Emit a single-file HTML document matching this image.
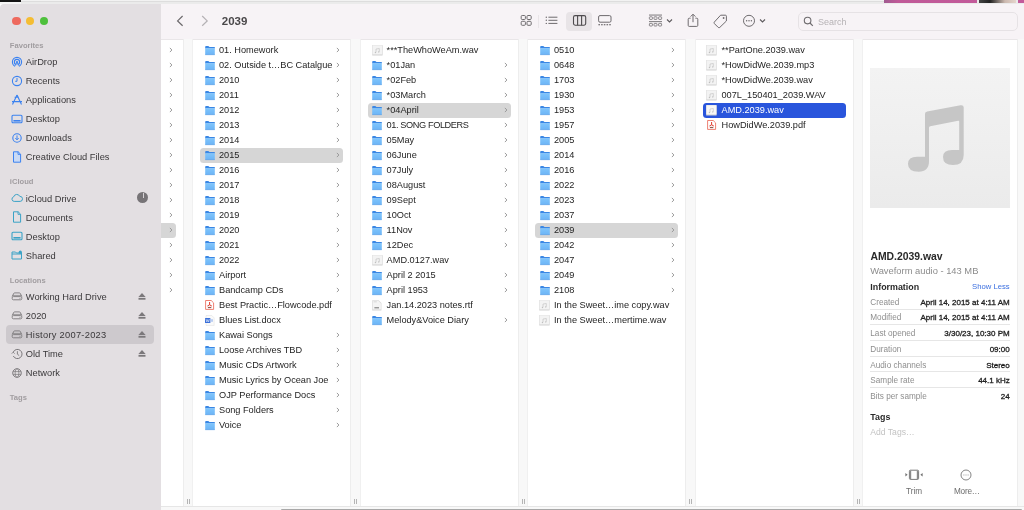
<!DOCTYPE html>
<html><head><meta charset="utf-8"><style>
*{box-sizing:border-box}
html,body{margin:0;padding:0;width:1024px;height:510px;overflow:hidden;background:#fff;font-family:"Liberation Sans", sans-serif}
.ic{position:absolute;display:block}
.hl{position:absolute;height:15px;border-radius:3.5px;background:#d6d6d6}
.rt{position:absolute;height:15px;line-height:15px;font-size:9.2px;white-space:nowrap;color:#242424;}
.gut{position:absolute;top:39px;height:467px;background:#f8f8f8;border-left:1px solid #ededed;border-right:1px solid #f0f0f0}
.grip{position:absolute;top:498.6px;width:3px;height:5px;border-left:1px solid #b4b4b4;border-right:1px solid #b4b4b4}
.sbsel{position:absolute;left:6px;width:148px;height:19px;border-radius:4px;background:#cdc9cd}
.sbt{position:absolute;left:25.8px;height:19px;line-height:19px;font-size:9.3px;color:#3a383a;white-space:nowrap;}
.sbi{position:absolute;left:10.5px;height:19px;display:flex;align-items:center}
.sbi svg{display:block}
.sbh{position:absolute;left:9.8px;height:19px;line-height:19px;font-size:7.6px;font-weight:bold;color:#a19da0;white-space:nowrap}
.pk{position:absolute;left:870.3px;height:10px;line-height:10px;font-size:8.2px;color:#8e8e8e;white-space:nowrap}
.pv{position:absolute;right:14.3px;height:10px;line-height:10px;font-size:8px;color:#1e1e1e;white-space:nowrap;-webkit-text-stroke:0.3px #1e1e1e}
.sep{position:absolute;left:870px;width:140px;height:1px;background:#e6e6e6}
</style></head><body><div id="root" style="position:absolute;left:0;top:0;width:1024px;height:510px;will-change:transform;overflow:hidden">
<!-- top strip -->
<div style="position:absolute;left:0;top:0;width:1024px;height:4px;background:#ebebeb"></div>
<div style="position:absolute;left:20px;top:0;width:864px;height:1px;background:#f2f2f2"></div>
<div style="position:absolute;left:20px;top:1.2px;width:864px;height:1px;background:#dddddd"></div>
<div style="position:absolute;left:0;top:0;width:21px;height:2px;background:#151515"></div>
<div style="position:absolute;left:0;top:2px;width:21px;height:1.5px;background:#f6f6f6"></div>
<div style="position:absolute;left:884px;top:0;width:93px;height:3px;background:linear-gradient(90deg,#a05a90,#c05a98 15%,#c25a9a)"></div>
<div style="position:absolute;left:979px;top:0;width:37px;height:3px;background:linear-gradient(90deg,#444 0%,#222 30%,#ccb9b0 70%,#e5d5cc 100%)"></div>
<div style="position:absolute;left:1018px;top:0;width:6px;height:3px;background:#c25a9a"></div>
<!-- sidebar -->
<div style="position:absolute;left:0;top:3.6px;width:161px;height:507px;background:#e3dfe2;border-top-left-radius:4px"></div>
<div style="position:absolute;left:12.1px;top:16.6px;width:8.6px;height:8.6px;border-radius:50%;background:#ee6a5e"></div>
<div style="position:absolute;left:25.8px;top:16.6px;width:8.6px;height:8.6px;border-radius:50%;background:#f4bd33"></div>
<div style="position:absolute;left:39.5px;top:16.6px;width:8.6px;height:8.6px;border-radius:50%;background:#4ec03c"></div>
<div class="sbh" style="top:36.45px">Favorites</div><div class="sbt" style="top:53.15px">AirDrop</div>
<div class="sbi" style="top:52.35px"><svg width="12" height="12" viewBox="0 0 12 12"><g fill="none" stroke="#3b82f0" stroke-width="1.15"><circle cx="6" cy="6" r="4.6"/><circle cx="6" cy="6" r="2.6"/></g><circle cx="6" cy="6" r="0.9" fill="#3b82f0"/><path d="M6 6.4 L3.2 12 L8.8 12 Z" fill="#e3dfe2"/><path d="M6 5.6 L4.6 9.6 M6 5.6 L7.4 9.6" stroke="#3b82f0" stroke-width="0.9"/></svg></div><div class="sbt" style="top:72.14999999999999px">Recents</div>
<div class="sbi" style="top:71.35px"><svg width="12" height="12" viewBox="0 0 12 12"><circle cx="6" cy="6" r="4.6" fill="none" stroke="#3b82f0" stroke-width="1.1"/><path d="M6 3 L6 6.3 L4.2 6.3" fill="none" stroke="#3b82f0" stroke-width="1"/></svg></div><div class="sbt" style="top:91.14999999999999px">Applications</div>
<div class="sbi" style="top:90.35px"><svg width="12" height="12" viewBox="0 0 12 12"><path d="M6 1 L10.5 10.5 M6 1 L1.5 10.5 M1 7.6 L11 7.6 M3.6 3.2 L7.8 3.2" fill="none" stroke="#3b82f0" stroke-width="1.1"/></svg></div><div class="sbt" style="top:110.14999999999999px">Desktop</div>
<div class="sbi" style="top:109.35px"><svg width="12" height="12" viewBox="0 0 12 12"><rect x="1" y="2.2" width="10" height="7.6" rx="1" fill="none" stroke="#3b82f0" stroke-width="1.1"/><rect x="2.4" y="7" width="7.2" height="1.6" fill="#3b82f0"/></svg></div><div class="sbt" style="top:129.15px">Downloads</div>
<div class="sbi" style="top:128.35px"><svg width="12" height="12" viewBox="0 0 12 12"><circle cx="6" cy="6" r="4.2" fill="none" stroke="#3b82f0" stroke-width="1.1"/><path d="M6 3.4 L6 7.8 M4.3 6.1 L6 7.8 L7.7 6.1" fill="none" stroke="#3b82f0" stroke-width="1"/></svg></div><div class="sbt" style="top:148.15px">Creative Cloud Files</div>
<div class="sbi" style="top:147.35px"><svg width="12" height="12" viewBox="0 0 12 12"><path d="M2.5 0.8 L7.2 0.8 L9.6 3.2 L9.6 11.2 L2.5 11.2 Z" fill="#c9daf5" stroke="#3b82f0" stroke-width="1"/><path d="M7 0.8 L7 3.4 L9.6 3.4" fill="none" stroke="#3b82f0" stroke-width="0.9"/></svg></div><div class="sbh" style="top:172.25px">iCloud</div><div class="sbt" style="top:189.55px">iCloud Drive</div>
<div class="sbi" style="top:188.75px"><svg width="12" height="12" viewBox="0 0 12 12"><path d="M3.2 9.4 A2.3 2.3 0 0 1 2.6 4.9 A3.3 3.3 0 0 1 8.8 4.4 A2.5 2.5 0 0 1 9.2 9.4 Z" fill="none" stroke="#3aa2c6" stroke-width="1"/></svg></div><div class="sbt" style="top:208.55px">Documents</div>
<div class="sbi" style="top:207.75px"><svg width="12" height="12" viewBox="0 0 12 12"><path d="M2.5 0.8 L7.2 0.8 L9.6 3.2 L9.6 11.2 L2.5 11.2 Z" fill="none" stroke="#3aa2c6" stroke-width="1"/><path d="M7 0.8 L7 3.4 L9.6 3.4" fill="none" stroke="#3aa2c6" stroke-width="0.9"/></svg></div><div class="sbt" style="top:227.55px">Desktop</div>
<div class="sbi" style="top:226.75px"><svg width="12" height="12" viewBox="0 0 12 12"><rect x="1" y="2.2" width="10" height="7.6" rx="1" fill="none" stroke="#3aa2c6" stroke-width="1.1"/><rect x="2.4" y="7" width="7.2" height="1.6" fill="#3aa2c6"/></svg></div><div class="sbt" style="top:246.54999999999998px">Shared</div>
<div class="sbi" style="top:245.74999999999997px"><svg width="12" height="12" viewBox="0 0 12 12"><path d="M1 3 L4.5 3 L5.5 4 L10.5 4 L10.5 10 L1 10 Z M1 5 L10.5 5" fill="none" stroke="#3aa2c6" stroke-width="1"/><circle cx="9.3" cy="3.2" r="1.6" fill="#3aa2c6"/></svg></div><div style="position:absolute;left:137.3px;top:192px;width:11px;height:11px;border-radius:50%;background:#777477"></div><div style="position:absolute;left:142.5px;top:192.6px;width:0.7px;height:5px;background:#d6d2d5"></div><div class="sbh" style="top:270.75000000000006px">Locations</div><div class="sbt" style="top:287.55px">Working Hard Drive</div>
<div class="sbi" style="top:286.75px"><svg width="12" height="12" viewBox="0 0 12 12"><g fill="none" stroke="#7b787b" stroke-width="0.9"><path d="M1.2 6.6 L2.8 3.3 Q3 2.9 3.5 2.9 L8.5 2.9 Q9 2.9 9.2 3.3 L10.8 6.6"/><rect x="1.2" y="6.6" width="9.6" height="3.2" rx="1.2"/><path d="M1.6 5.4 L10.4 5.4" stroke-width="0.7"/></g><circle cx="9" cy="8.2" r="0.5" fill="#7b787b"/></svg></div>
<svg class="ic" style="left:137.7px;top:292.55px" width="8" height="8" viewBox="0 0 8 8"><path d="M4 0 L7.6 3.9 L0.4 3.9 Z" fill="#7b787b"/><rect x="0.5" y="4.9" width="7" height="1.8" fill="#7b787b"/></svg><div class="sbt" style="top:306.65000000000003px">2020</div>
<div class="sbi" style="top:305.85px"><svg width="12" height="12" viewBox="0 0 12 12"><g fill="none" stroke="#7b787b" stroke-width="0.9"><path d="M1.2 6.6 L2.8 3.3 Q3 2.9 3.5 2.9 L8.5 2.9 Q9 2.9 9.2 3.3 L10.8 6.6"/><rect x="1.2" y="6.6" width="9.6" height="3.2" rx="1.2"/><path d="M1.6 5.4 L10.4 5.4" stroke-width="0.7"/></g><circle cx="9" cy="8.2" r="0.5" fill="#7b787b"/></svg></div>
<svg class="ic" style="left:137.7px;top:311.65000000000003px" width="8" height="8" viewBox="0 0 8 8"><path d="M4 0 L7.6 3.9 L0.4 3.9 Z" fill="#7b787b"/><rect x="0.5" y="4.9" width="7" height="1.8" fill="#7b787b"/></svg><div class="sbsel" style="top:324.95px"></div>
<div class="sbt" style="top:325.75px"><span style="letter-spacing:0.28px">History 2007-2023</span></div>
<div class="sbi" style="top:324.95px"><svg width="12" height="12" viewBox="0 0 12 12"><g fill="none" stroke="#7b787b" stroke-width="0.9"><path d="M1.2 6.6 L2.8 3.3 Q3 2.9 3.5 2.9 L8.5 2.9 Q9 2.9 9.2 3.3 L10.8 6.6"/><rect x="1.2" y="6.6" width="9.6" height="3.2" rx="1.2"/><path d="M1.6 5.4 L10.4 5.4" stroke-width="0.7"/></g><circle cx="9" cy="8.2" r="0.5" fill="#7b787b"/></svg></div>
<svg class="ic" style="left:137.7px;top:330.75px" width="8" height="8" viewBox="0 0 8 8"><path d="M4 0 L7.6 3.9 L0.4 3.9 Z" fill="#7b787b"/><rect x="0.5" y="4.9" width="7" height="1.8" fill="#7b787b"/></svg><div class="sbt" style="top:344.85px">Old Time</div>
<div class="sbi" style="top:344.05px"><svg width="12" height="12" viewBox="0 0 12 12"><path d="M2.2 4.2 A4.6 4.6 0 1 1 2.3 8" fill="none" stroke="#7b787b" stroke-width="1"/><path d="M0.8 5.6 L2.2 4.2 L3.6 5.6" fill="none" stroke="#7b787b" stroke-width="0.9"/><path d="M6.4 3.2 L6.4 6.2 L8.2 7.6" fill="none" stroke="#7b787b" stroke-width="0.9"/></svg></div>
<svg class="ic" style="left:137.7px;top:349.85px" width="8" height="8" viewBox="0 0 8 8"><path d="M4 0 L7.6 3.9 L0.4 3.9 Z" fill="#7b787b"/><rect x="0.5" y="4.9" width="7" height="1.8" fill="#7b787b"/></svg><div class="sbt" style="top:363.95px">Network</div>
<div class="sbi" style="top:363.15px"><svg width="12" height="12" viewBox="0 0 12 12"><g fill="none" stroke="#7b787b"><circle cx="6" cy="6" r="4.3" stroke-width="0.95"/><ellipse cx="6" cy="6" rx="1.9" ry="4.3" stroke-width="0.7"/><path d="M2 4.6 L10 4.6 M2 7.4 L10 7.4" stroke-width="0.7"/></g></svg></div><div class="sbh" style="top:387.75000000000006px">Tags</div>
<!-- toolbar -->
<div style="position:absolute;left:161px;top:3.6px;width:863px;height:35.4px;background:#f7f3f6"></div>
<div style="position:absolute;left:161px;top:39px;width:863px;height:1px;background:#e9e6e8"></div>
<svg class="ic" style="left:176px;top:15px" width="8" height="12" viewBox="0 0 8 12"><path d="M6.6 1 L1.6 5.9 L6.6 10.8" stroke="#6b686b" stroke-width="1.2" fill="none"/></svg>
<svg class="ic" style="left:201px;top:15px" width="8" height="12" viewBox="0 0 8 12"><path d="M1.2 1 L6.2 5.9 L1.2 10.8" stroke="#b4b1b4" stroke-width="1.2" fill="none"/></svg>
<div style="position:absolute;left:221.8px;top:13px;height:16px;line-height:16px;font-size:11.5px;font-weight:bold;color:#4a484a">2039</div>
<!-- view icons -->
<svg class="ic" style="left:520px;top:14px" width="13" height="13" viewBox="0 0 13 13"><g fill="none" stroke="#6e6b6e" stroke-width="1"><rect x="1.2" y="1.5" width="4.2" height="4" rx="1"/><rect x="7" y="1.5" width="4.2" height="4" rx="1"/><rect x="1.2" y="7.3" width="4.2" height="4" rx="1"/><rect x="7" y="7.3" width="4.2" height="4" rx="1"/></g></svg>
<div style="position:absolute;left:538px;top:14.5px;width:1px;height:13px;background:#e9e5e8"></div>
<svg class="ic" style="left:545px;top:14px" width="13" height="13" viewBox="0 0 13 13"><g fill="#6e6b6e"><circle cx="1.3" cy="3.2" r="0.7"/><circle cx="1.3" cy="6.3" r="0.7"/><circle cx="1.3" cy="9.4" r="0.7"/><rect x="3.4" y="2.7" width="9" height="1"/><rect x="3.4" y="5.8" width="9" height="1"/><rect x="3.4" y="8.9" width="9" height="1"/></g></svg>
<div style="position:absolute;left:566px;top:12px;width:26px;height:19px;border-radius:4px;background:#e8e4e7"></div>
<svg class="ic" style="left:572px;top:14px" width="15" height="13" viewBox="0 0 15 13"><g fill="none" stroke="#4e4b4e" stroke-width="1.1"><rect x="1.5" y="1.6" width="12.2" height="9.6" rx="1.6"/><path d="M5.6 1.6 L5.6 11.2 M9.6 1.6 L9.6 11.2"/></g></svg>
<svg class="ic" style="left:597px;top:14px" width="16" height="13" viewBox="0 0 16 13"><g fill="none" stroke="#6e6b6e" stroke-width="1"><rect x="1.6" y="1.6" width="12.4" height="6.6" rx="1.4"/></g><g fill="#6e6b6e"><rect x="1.4" y="10.1" width="1.6" height="1.2"/><rect x="4.1" y="10.1" width="1.6" height="1.2"/><rect x="6.8" y="10.1" width="1.6" height="1.2"/><rect x="9.5" y="10.1" width="1.6" height="1.2"/><rect x="12.2" y="10.1" width="1.6" height="1.2"/></g></svg>
<!-- group -->
<svg class="ic" style="left:648px;top:14px" width="15" height="14" viewBox="0 0 15 14"><g fill="#6e6b6e"><rect x="1" y="0.6" width="13" height="0.9"/><rect x="1" y="7.2" width="13" height="0.9"/></g><g fill="none" stroke="#6e6b6e" stroke-width="0.8"><rect x="1.4" y="2.8" width="3" height="2.6" rx="0.6"/><rect x="6" y="2.8" width="3" height="2.6" rx="0.6"/><rect x="10.6" y="2.8" width="3" height="2.6" rx="0.6"/><rect x="1.4" y="9.4" width="3" height="2.6" rx="0.6"/><rect x="6" y="9.4" width="3" height="2.6" rx="0.6"/><rect x="10.6" y="9.4" width="3" height="2.6" rx="0.6"/></g></svg>
<svg class="ic" style="left:666px;top:18px" width="7" height="6" viewBox="0 0 7 6"><path d="M1 1.5 L3.5 4 L6 1.5" stroke="#5e5b5e" stroke-width="1.1" fill="none"/></svg>
<!-- share -->
<svg class="ic" style="left:686px;top:13px" width="14" height="15" viewBox="0 0 14 15"><g fill="none" stroke="#6e6b6e" stroke-width="1"><path d="M4.6 5.2 L3.2 5.2 Q2.2 5.2 2.2 6.2 L2.2 12.4 Q2.2 13.4 3.2 13.4 L10.8 13.4 Q11.8 13.4 11.8 12.4 L11.8 6.2 Q11.8 5.2 10.8 5.2 L9.4 5.2"/><path d="M7 9.2 L7 1.4 M4.6 3.6 L7 1.2 L9.4 3.6"/></g></svg>
<!-- tag -->
<svg class="ic" style="left:713px;top:14px" width="15" height="15" viewBox="0 0 15 15"><g fill="none" stroke="#6e6b6e" stroke-width="1"><path d="M7.6 1.2 L12.4 1.2 Q13.4 1.2 13.4 2.2 L13.4 7 L6.8 13.4 Q6 14.2 5.2 13.4 L1.4 9.6 Q0.6 8.8 1.4 8 Z"/></g><circle cx="10.6" cy="4" r="0.9" fill="#6e6b6e"/></svg>
<!-- more -->
<svg class="ic" style="left:742px;top:14px" width="14" height="14" viewBox="0 0 14 14"><circle cx="7" cy="6.8" r="5.5" fill="none" stroke="#6e6b6e" stroke-width="1"/><g fill="#6e6b6e"><circle cx="4.6" cy="6.8" r="0.75"/><circle cx="7" cy="6.8" r="0.75"/><circle cx="9.4" cy="6.8" r="0.75"/></g></svg>
<svg class="ic" style="left:758.9px;top:18px" width="7" height="6" viewBox="0 0 7 6"><path d="M1 1.5 L3.5 4 L6 1.5" stroke="#5e5b5e" stroke-width="1.1" fill="none"/></svg>
<!-- search -->
<div style="position:absolute;left:798px;top:12px;width:220px;height:19px;border-radius:5px;border:1px solid #e6e2e5;background:#f7f3f6"></div>
<svg class="ic" style="left:803px;top:16px" width="11" height="11" viewBox="0 0 11 11"><circle cx="4.6" cy="4.6" r="3.3" fill="none" stroke="#6e6b6e" stroke-width="1.1"/><path d="M7 7 L9.8 9.8" stroke="#6e6b6e" stroke-width="1.2"/></svg>
<div style="position:absolute;left:818px;top:15.2px;height:15px;line-height:15px;font-size:9px;color:#b6b2b5">Search</div>
<svg width="0" height="0" style="position:absolute"><defs><linearGradient id="fg" x1="0" y1="0" x2="0" y2="1"><stop offset="0" stop-color="#7fc5fc"/><stop offset="1" stop-color="#6cb4f6"/></linearGradient></defs></svg>
<!-- columns -->
<svg class="ic" style="left:168.6px;top:47px" width="4" height="6" viewBox="0 0 4 6"><path d="M0.9 0.9 L2.9 3 L0.9 5.1" stroke="#979797" stroke-width="0.95" fill="none"/></svg><svg class="ic" style="left:168.6px;top:62px" width="4" height="6" viewBox="0 0 4 6"><path d="M0.9 0.9 L2.9 3 L0.9 5.1" stroke="#979797" stroke-width="0.95" fill="none"/></svg><svg class="ic" style="left:168.6px;top:77px" width="4" height="6" viewBox="0 0 4 6"><path d="M0.9 0.9 L2.9 3 L0.9 5.1" stroke="#979797" stroke-width="0.95" fill="none"/></svg><svg class="ic" style="left:168.6px;top:92px" width="4" height="6" viewBox="0 0 4 6"><path d="M0.9 0.9 L2.9 3 L0.9 5.1" stroke="#979797" stroke-width="0.95" fill="none"/></svg><svg class="ic" style="left:168.6px;top:107px" width="4" height="6" viewBox="0 0 4 6"><path d="M0.9 0.9 L2.9 3 L0.9 5.1" stroke="#979797" stroke-width="0.95" fill="none"/></svg><svg class="ic" style="left:168.6px;top:122px" width="4" height="6" viewBox="0 0 4 6"><path d="M0.9 0.9 L2.9 3 L0.9 5.1" stroke="#979797" stroke-width="0.95" fill="none"/></svg><svg class="ic" style="left:168.6px;top:137px" width="4" height="6" viewBox="0 0 4 6"><path d="M0.9 0.9 L2.9 3 L0.9 5.1" stroke="#979797" stroke-width="0.95" fill="none"/></svg><svg class="ic" style="left:168.6px;top:152px" width="4" height="6" viewBox="0 0 4 6"><path d="M0.9 0.9 L2.9 3 L0.9 5.1" stroke="#979797" stroke-width="0.95" fill="none"/></svg><svg class="ic" style="left:168.6px;top:167px" width="4" height="6" viewBox="0 0 4 6"><path d="M0.9 0.9 L2.9 3 L0.9 5.1" stroke="#979797" stroke-width="0.95" fill="none"/></svg><svg class="ic" style="left:168.6px;top:182px" width="4" height="6" viewBox="0 0 4 6"><path d="M0.9 0.9 L2.9 3 L0.9 5.1" stroke="#979797" stroke-width="0.95" fill="none"/></svg><svg class="ic" style="left:168.6px;top:197px" width="4" height="6" viewBox="0 0 4 6"><path d="M0.9 0.9 L2.9 3 L0.9 5.1" stroke="#979797" stroke-width="0.95" fill="none"/></svg><svg class="ic" style="left:168.6px;top:212px" width="4" height="6" viewBox="0 0 4 6"><path d="M0.9 0.9 L2.9 3 L0.9 5.1" stroke="#979797" stroke-width="0.95" fill="none"/></svg><div class="hl" style="left:161px;top:223px;width:15px;border-top-left-radius:0;border-bottom-left-radius:0"></div><svg class="ic" style="left:168.6px;top:227px" width="4" height="6" viewBox="0 0 4 6"><path d="M0.9 0.9 L2.9 3 L0.9 5.1" stroke="#979797" stroke-width="0.95" fill="none"/></svg><svg class="ic" style="left:168.6px;top:242px" width="4" height="6" viewBox="0 0 4 6"><path d="M0.9 0.9 L2.9 3 L0.9 5.1" stroke="#979797" stroke-width="0.95" fill="none"/></svg><svg class="ic" style="left:168.6px;top:257px" width="4" height="6" viewBox="0 0 4 6"><path d="M0.9 0.9 L2.9 3 L0.9 5.1" stroke="#979797" stroke-width="0.95" fill="none"/></svg><svg class="ic" style="left:168.6px;top:272px" width="4" height="6" viewBox="0 0 4 6"><path d="M0.9 0.9 L2.9 3 L0.9 5.1" stroke="#979797" stroke-width="0.95" fill="none"/></svg><svg class="ic" style="left:168.6px;top:287px" width="4" height="6" viewBox="0 0 4 6"><path d="M0.9 0.9 L2.9 3 L0.9 5.1" stroke="#979797" stroke-width="0.95" fill="none"/></svg>
<div class="gut" style="left:183px;width:10px"></div><div class="grip" style="left:187px"></div><div class="gut" style="left:350px;width:11px"></div><div class="grip" style="left:354px"></div><div class="gut" style="left:518px;width:10px"></div><div class="grip" style="left:522px"></div><div class="gut" style="left:685px;width:11px"></div><div class="grip" style="left:689px"></div><div class="gut" style="left:853px;width:10px"></div><div class="grip" style="left:857px"></div>
<div class="gut" style="left:1017px;width:7px;border-right:none"></div>
<svg class="ic" style="left:204.5px;top:45.7px" width="10" height="10" viewBox="0 0 10 10"><path d="M0.2 0.9 Q0.2 0 1 0 L3.2 0 Q3.7 0 4 0.4 L4.4 1.1 L9.8 1.1 L9.8 2.4 L0.2 2.4 Z" fill="#3a87e4"/><rect x="0.2" y="2.3" width="9.6" height="6.4" fill="url(#fg)"/><rect x="0.2" y="8.4" width="9.6" height="0.7" fill="#589fe8"/></svg>
<div class="rt" style="left:219px;top:43.4px;color:#242424">01. Homework</div>
<svg class="ic" style="left:336.2px;top:47px" width="4" height="6" viewBox="0 0 4 6"><path d="M0.9 0.9 L2.9 3 L0.9 5.1" stroke="#979797" stroke-width="0.95" fill="none"/></svg>
<svg class="ic" style="left:204.5px;top:60.7px" width="10" height="10" viewBox="0 0 10 10"><path d="M0.2 0.9 Q0.2 0 1 0 L3.2 0 Q3.7 0 4 0.4 L4.4 1.1 L9.8 1.1 L9.8 2.4 L0.2 2.4 Z" fill="#3a87e4"/><rect x="0.2" y="2.3" width="9.6" height="6.4" fill="url(#fg)"/><rect x="0.2" y="8.4" width="9.6" height="0.7" fill="#589fe8"/></svg>
<div class="rt" style="left:219px;top:58.4px;color:#242424">02. Outside t…BC Catalgue</div>
<svg class="ic" style="left:336.2px;top:62px" width="4" height="6" viewBox="0 0 4 6"><path d="M0.9 0.9 L2.9 3 L0.9 5.1" stroke="#979797" stroke-width="0.95" fill="none"/></svg>
<svg class="ic" style="left:204.5px;top:75.7px" width="10" height="10" viewBox="0 0 10 10"><path d="M0.2 0.9 Q0.2 0 1 0 L3.2 0 Q3.7 0 4 0.4 L4.4 1.1 L9.8 1.1 L9.8 2.4 L0.2 2.4 Z" fill="#3a87e4"/><rect x="0.2" y="2.3" width="9.6" height="6.4" fill="url(#fg)"/><rect x="0.2" y="8.4" width="9.6" height="0.7" fill="#589fe8"/></svg>
<div class="rt" style="left:219px;top:73.4px;color:#242424">2010</div>
<svg class="ic" style="left:336.2px;top:77px" width="4" height="6" viewBox="0 0 4 6"><path d="M0.9 0.9 L2.9 3 L0.9 5.1" stroke="#979797" stroke-width="0.95" fill="none"/></svg>
<svg class="ic" style="left:204.5px;top:90.7px" width="10" height="10" viewBox="0 0 10 10"><path d="M0.2 0.9 Q0.2 0 1 0 L3.2 0 Q3.7 0 4 0.4 L4.4 1.1 L9.8 1.1 L9.8 2.4 L0.2 2.4 Z" fill="#3a87e4"/><rect x="0.2" y="2.3" width="9.6" height="6.4" fill="url(#fg)"/><rect x="0.2" y="8.4" width="9.6" height="0.7" fill="#589fe8"/></svg>
<div class="rt" style="left:219px;top:88.4px;color:#242424">2011</div>
<svg class="ic" style="left:336.2px;top:92px" width="4" height="6" viewBox="0 0 4 6"><path d="M0.9 0.9 L2.9 3 L0.9 5.1" stroke="#979797" stroke-width="0.95" fill="none"/></svg>
<svg class="ic" style="left:204.5px;top:105.7px" width="10" height="10" viewBox="0 0 10 10"><path d="M0.2 0.9 Q0.2 0 1 0 L3.2 0 Q3.7 0 4 0.4 L4.4 1.1 L9.8 1.1 L9.8 2.4 L0.2 2.4 Z" fill="#3a87e4"/><rect x="0.2" y="2.3" width="9.6" height="6.4" fill="url(#fg)"/><rect x="0.2" y="8.4" width="9.6" height="0.7" fill="#589fe8"/></svg>
<div class="rt" style="left:219px;top:103.4px;color:#242424">2012</div>
<svg class="ic" style="left:336.2px;top:107px" width="4" height="6" viewBox="0 0 4 6"><path d="M0.9 0.9 L2.9 3 L0.9 5.1" stroke="#979797" stroke-width="0.95" fill="none"/></svg>
<svg class="ic" style="left:204.5px;top:120.7px" width="10" height="10" viewBox="0 0 10 10"><path d="M0.2 0.9 Q0.2 0 1 0 L3.2 0 Q3.7 0 4 0.4 L4.4 1.1 L9.8 1.1 L9.8 2.4 L0.2 2.4 Z" fill="#3a87e4"/><rect x="0.2" y="2.3" width="9.6" height="6.4" fill="url(#fg)"/><rect x="0.2" y="8.4" width="9.6" height="0.7" fill="#589fe8"/></svg>
<div class="rt" style="left:219px;top:118.4px;color:#242424">2013</div>
<svg class="ic" style="left:336.2px;top:122px" width="4" height="6" viewBox="0 0 4 6"><path d="M0.9 0.9 L2.9 3 L0.9 5.1" stroke="#979797" stroke-width="0.95" fill="none"/></svg>
<svg class="ic" style="left:204.5px;top:135.7px" width="10" height="10" viewBox="0 0 10 10"><path d="M0.2 0.9 Q0.2 0 1 0 L3.2 0 Q3.7 0 4 0.4 L4.4 1.1 L9.8 1.1 L9.8 2.4 L0.2 2.4 Z" fill="#3a87e4"/><rect x="0.2" y="2.3" width="9.6" height="6.4" fill="url(#fg)"/><rect x="0.2" y="8.4" width="9.6" height="0.7" fill="#589fe8"/></svg>
<div class="rt" style="left:219px;top:133.4px;color:#242424">2014</div>
<svg class="ic" style="left:336.2px;top:137px" width="4" height="6" viewBox="0 0 4 6"><path d="M0.9 0.9 L2.9 3 L0.9 5.1" stroke="#979797" stroke-width="0.95" fill="none"/></svg>
<div class="hl" style="left:200px;top:148px;width:143.4px;background:#d6d6d6"></div>
<svg class="ic" style="left:204.5px;top:150.7px" width="10" height="10" viewBox="0 0 10 10"><path d="M0.2 0.9 Q0.2 0 1 0 L3.2 0 Q3.7 0 4 0.4 L4.4 1.1 L9.8 1.1 L9.8 2.4 L0.2 2.4 Z" fill="#3a87e4"/><rect x="0.2" y="2.3" width="9.6" height="6.4" fill="url(#fg)"/><rect x="0.2" y="8.4" width="9.6" height="0.7" fill="#589fe8"/></svg>
<div class="rt" style="left:219px;top:148.4px;color:#242424">2015</div>
<svg class="ic" style="left:336.2px;top:152px" width="4" height="6" viewBox="0 0 4 6"><path d="M0.9 0.9 L2.9 3 L0.9 5.1" stroke="#979797" stroke-width="0.95" fill="none"/></svg>
<svg class="ic" style="left:204.5px;top:165.7px" width="10" height="10" viewBox="0 0 10 10"><path d="M0.2 0.9 Q0.2 0 1 0 L3.2 0 Q3.7 0 4 0.4 L4.4 1.1 L9.8 1.1 L9.8 2.4 L0.2 2.4 Z" fill="#3a87e4"/><rect x="0.2" y="2.3" width="9.6" height="6.4" fill="url(#fg)"/><rect x="0.2" y="8.4" width="9.6" height="0.7" fill="#589fe8"/></svg>
<div class="rt" style="left:219px;top:163.4px;color:#242424">2016</div>
<svg class="ic" style="left:336.2px;top:167px" width="4" height="6" viewBox="0 0 4 6"><path d="M0.9 0.9 L2.9 3 L0.9 5.1" stroke="#979797" stroke-width="0.95" fill="none"/></svg>
<svg class="ic" style="left:204.5px;top:180.7px" width="10" height="10" viewBox="0 0 10 10"><path d="M0.2 0.9 Q0.2 0 1 0 L3.2 0 Q3.7 0 4 0.4 L4.4 1.1 L9.8 1.1 L9.8 2.4 L0.2 2.4 Z" fill="#3a87e4"/><rect x="0.2" y="2.3" width="9.6" height="6.4" fill="url(#fg)"/><rect x="0.2" y="8.4" width="9.6" height="0.7" fill="#589fe8"/></svg>
<div class="rt" style="left:219px;top:178.4px;color:#242424">2017</div>
<svg class="ic" style="left:336.2px;top:182px" width="4" height="6" viewBox="0 0 4 6"><path d="M0.9 0.9 L2.9 3 L0.9 5.1" stroke="#979797" stroke-width="0.95" fill="none"/></svg>
<svg class="ic" style="left:204.5px;top:195.7px" width="10" height="10" viewBox="0 0 10 10"><path d="M0.2 0.9 Q0.2 0 1 0 L3.2 0 Q3.7 0 4 0.4 L4.4 1.1 L9.8 1.1 L9.8 2.4 L0.2 2.4 Z" fill="#3a87e4"/><rect x="0.2" y="2.3" width="9.6" height="6.4" fill="url(#fg)"/><rect x="0.2" y="8.4" width="9.6" height="0.7" fill="#589fe8"/></svg>
<div class="rt" style="left:219px;top:193.4px;color:#242424">2018</div>
<svg class="ic" style="left:336.2px;top:197px" width="4" height="6" viewBox="0 0 4 6"><path d="M0.9 0.9 L2.9 3 L0.9 5.1" stroke="#979797" stroke-width="0.95" fill="none"/></svg>
<svg class="ic" style="left:204.5px;top:210.7px" width="10" height="10" viewBox="0 0 10 10"><path d="M0.2 0.9 Q0.2 0 1 0 L3.2 0 Q3.7 0 4 0.4 L4.4 1.1 L9.8 1.1 L9.8 2.4 L0.2 2.4 Z" fill="#3a87e4"/><rect x="0.2" y="2.3" width="9.6" height="6.4" fill="url(#fg)"/><rect x="0.2" y="8.4" width="9.6" height="0.7" fill="#589fe8"/></svg>
<div class="rt" style="left:219px;top:208.4px;color:#242424">2019</div>
<svg class="ic" style="left:336.2px;top:212px" width="4" height="6" viewBox="0 0 4 6"><path d="M0.9 0.9 L2.9 3 L0.9 5.1" stroke="#979797" stroke-width="0.95" fill="none"/></svg>
<svg class="ic" style="left:204.5px;top:225.7px" width="10" height="10" viewBox="0 0 10 10"><path d="M0.2 0.9 Q0.2 0 1 0 L3.2 0 Q3.7 0 4 0.4 L4.4 1.1 L9.8 1.1 L9.8 2.4 L0.2 2.4 Z" fill="#3a87e4"/><rect x="0.2" y="2.3" width="9.6" height="6.4" fill="url(#fg)"/><rect x="0.2" y="8.4" width="9.6" height="0.7" fill="#589fe8"/></svg>
<div class="rt" style="left:219px;top:223.4px;color:#242424">2020</div>
<svg class="ic" style="left:336.2px;top:227px" width="4" height="6" viewBox="0 0 4 6"><path d="M0.9 0.9 L2.9 3 L0.9 5.1" stroke="#979797" stroke-width="0.95" fill="none"/></svg>
<svg class="ic" style="left:204.5px;top:240.7px" width="10" height="10" viewBox="0 0 10 10"><path d="M0.2 0.9 Q0.2 0 1 0 L3.2 0 Q3.7 0 4 0.4 L4.4 1.1 L9.8 1.1 L9.8 2.4 L0.2 2.4 Z" fill="#3a87e4"/><rect x="0.2" y="2.3" width="9.6" height="6.4" fill="url(#fg)"/><rect x="0.2" y="8.4" width="9.6" height="0.7" fill="#589fe8"/></svg>
<div class="rt" style="left:219px;top:238.4px;color:#242424">2021</div>
<svg class="ic" style="left:336.2px;top:242px" width="4" height="6" viewBox="0 0 4 6"><path d="M0.9 0.9 L2.9 3 L0.9 5.1" stroke="#979797" stroke-width="0.95" fill="none"/></svg>
<svg class="ic" style="left:204.5px;top:255.7px" width="10" height="10" viewBox="0 0 10 10"><path d="M0.2 0.9 Q0.2 0 1 0 L3.2 0 Q3.7 0 4 0.4 L4.4 1.1 L9.8 1.1 L9.8 2.4 L0.2 2.4 Z" fill="#3a87e4"/><rect x="0.2" y="2.3" width="9.6" height="6.4" fill="url(#fg)"/><rect x="0.2" y="8.4" width="9.6" height="0.7" fill="#589fe8"/></svg>
<div class="rt" style="left:219px;top:253.4px;color:#242424">2022</div>
<svg class="ic" style="left:336.2px;top:257px" width="4" height="6" viewBox="0 0 4 6"><path d="M0.9 0.9 L2.9 3 L0.9 5.1" stroke="#979797" stroke-width="0.95" fill="none"/></svg>
<svg class="ic" style="left:204.5px;top:270.7px" width="10" height="10" viewBox="0 0 10 10"><path d="M0.2 0.9 Q0.2 0 1 0 L3.2 0 Q3.7 0 4 0.4 L4.4 1.1 L9.8 1.1 L9.8 2.4 L0.2 2.4 Z" fill="#3a87e4"/><rect x="0.2" y="2.3" width="9.6" height="6.4" fill="url(#fg)"/><rect x="0.2" y="8.4" width="9.6" height="0.7" fill="#589fe8"/></svg>
<div class="rt" style="left:219px;top:268.4px;color:#242424">Airport</div>
<svg class="ic" style="left:336.2px;top:272px" width="4" height="6" viewBox="0 0 4 6"><path d="M0.9 0.9 L2.9 3 L0.9 5.1" stroke="#979797" stroke-width="0.95" fill="none"/></svg>
<svg class="ic" style="left:204.5px;top:285.7px" width="10" height="10" viewBox="0 0 10 10"><path d="M0.2 0.9 Q0.2 0 1 0 L3.2 0 Q3.7 0 4 0.4 L4.4 1.1 L9.8 1.1 L9.8 2.4 L0.2 2.4 Z" fill="#3a87e4"/><rect x="0.2" y="2.3" width="9.6" height="6.4" fill="url(#fg)"/><rect x="0.2" y="8.4" width="9.6" height="0.7" fill="#589fe8"/></svg>
<div class="rt" style="left:219px;top:283.4px;color:#242424">Bandcamp CDs</div>
<svg class="ic" style="left:336.2px;top:287px" width="4" height="6" viewBox="0 0 4 6"><path d="M0.9 0.9 L2.9 3 L0.9 5.1" stroke="#979797" stroke-width="0.95" fill="none"/></svg>
<svg class="ic" style="left:204.5px;top:300px" width="10" height="11" viewBox="0 0 10 11"><path d="M0.6 0.5 L6.2 0.5 L8.6 2.9 L8.6 9.4 L0.6 9.4 Z" fill="#fff" stroke="#e8614f" stroke-width="0.8"/><path d="M4.6 2 L4.6 4.8 M2.4 6 L4.6 4.8 L6.8 6" stroke="#e0392a" stroke-width="1" fill="none"/><rect x="2.9" y="6.9" width="3.4" height="1.2" fill="#8b5a50"/></svg>
<div class="rt" style="left:219px;top:298.4px;color:#242424">Best Practic…Flowcode.pdf</div>
<svg class="ic" style="left:204.5px;top:315px" width="10" height="11" viewBox="0 0 10 11"><path d="M1 0.5 L6.8 0.5 L9.2 2.9 L9.2 10.4 L1 10.4 Z" fill="#fafafa" stroke="#dcdcdc" stroke-width="0.5"/><rect x="0" y="3" width="5.4" height="5" rx="0.5" fill="#3a6fd8"/><rect x="5.6" y="4.2" width="2.4" height="2.6" fill="#b9cdf2"/><path d="M1 4 L1.8 7 L2.7 4.6 L3.6 7 L4.4 4" stroke="#fff" stroke-width="0.5" fill="none"/></svg>
<div class="rt" style="left:219px;top:313.4px;color:#242424">Blues List.docx</div>
<svg class="ic" style="left:204.5px;top:330.7px" width="10" height="10" viewBox="0 0 10 10"><path d="M0.2 0.9 Q0.2 0 1 0 L3.2 0 Q3.7 0 4 0.4 L4.4 1.1 L9.8 1.1 L9.8 2.4 L0.2 2.4 Z" fill="#3a87e4"/><rect x="0.2" y="2.3" width="9.6" height="6.4" fill="url(#fg)"/><rect x="0.2" y="8.4" width="9.6" height="0.7" fill="#589fe8"/></svg>
<div class="rt" style="left:219px;top:328.4px;color:#242424">Kawai Songs</div>
<svg class="ic" style="left:336.2px;top:332px" width="4" height="6" viewBox="0 0 4 6"><path d="M0.9 0.9 L2.9 3 L0.9 5.1" stroke="#979797" stroke-width="0.95" fill="none"/></svg>
<svg class="ic" style="left:204.5px;top:345.7px" width="10" height="10" viewBox="0 0 10 10"><path d="M0.2 0.9 Q0.2 0 1 0 L3.2 0 Q3.7 0 4 0.4 L4.4 1.1 L9.8 1.1 L9.8 2.4 L0.2 2.4 Z" fill="#3a87e4"/><rect x="0.2" y="2.3" width="9.6" height="6.4" fill="url(#fg)"/><rect x="0.2" y="8.4" width="9.6" height="0.7" fill="#589fe8"/></svg>
<div class="rt" style="left:219px;top:343.4px;color:#242424">Loose Archives TBD</div>
<svg class="ic" style="left:336.2px;top:347px" width="4" height="6" viewBox="0 0 4 6"><path d="M0.9 0.9 L2.9 3 L0.9 5.1" stroke="#979797" stroke-width="0.95" fill="none"/></svg>
<svg class="ic" style="left:204.5px;top:360.7px" width="10" height="10" viewBox="0 0 10 10"><path d="M0.2 0.9 Q0.2 0 1 0 L3.2 0 Q3.7 0 4 0.4 L4.4 1.1 L9.8 1.1 L9.8 2.4 L0.2 2.4 Z" fill="#3a87e4"/><rect x="0.2" y="2.3" width="9.6" height="6.4" fill="url(#fg)"/><rect x="0.2" y="8.4" width="9.6" height="0.7" fill="#589fe8"/></svg>
<div class="rt" style="left:219px;top:358.4px;color:#242424">Music CDs Artwork</div>
<svg class="ic" style="left:336.2px;top:362px" width="4" height="6" viewBox="0 0 4 6"><path d="M0.9 0.9 L2.9 3 L0.9 5.1" stroke="#979797" stroke-width="0.95" fill="none"/></svg>
<svg class="ic" style="left:204.5px;top:375.7px" width="10" height="10" viewBox="0 0 10 10"><path d="M0.2 0.9 Q0.2 0 1 0 L3.2 0 Q3.7 0 4 0.4 L4.4 1.1 L9.8 1.1 L9.8 2.4 L0.2 2.4 Z" fill="#3a87e4"/><rect x="0.2" y="2.3" width="9.6" height="6.4" fill="url(#fg)"/><rect x="0.2" y="8.4" width="9.6" height="0.7" fill="#589fe8"/></svg>
<div class="rt" style="left:219px;top:373.4px;color:#242424">Music Lyrics by Ocean Joe</div>
<svg class="ic" style="left:336.2px;top:377px" width="4" height="6" viewBox="0 0 4 6"><path d="M0.9 0.9 L2.9 3 L0.9 5.1" stroke="#979797" stroke-width="0.95" fill="none"/></svg>
<svg class="ic" style="left:204.5px;top:390.7px" width="10" height="10" viewBox="0 0 10 10"><path d="M0.2 0.9 Q0.2 0 1 0 L3.2 0 Q3.7 0 4 0.4 L4.4 1.1 L9.8 1.1 L9.8 2.4 L0.2 2.4 Z" fill="#3a87e4"/><rect x="0.2" y="2.3" width="9.6" height="6.4" fill="url(#fg)"/><rect x="0.2" y="8.4" width="9.6" height="0.7" fill="#589fe8"/></svg>
<div class="rt" style="left:219px;top:388.4px;color:#242424">OJP Performance Docs</div>
<svg class="ic" style="left:336.2px;top:392px" width="4" height="6" viewBox="0 0 4 6"><path d="M0.9 0.9 L2.9 3 L0.9 5.1" stroke="#979797" stroke-width="0.95" fill="none"/></svg>
<svg class="ic" style="left:204.5px;top:405.7px" width="10" height="10" viewBox="0 0 10 10"><path d="M0.2 0.9 Q0.2 0 1 0 L3.2 0 Q3.7 0 4 0.4 L4.4 1.1 L9.8 1.1 L9.8 2.4 L0.2 2.4 Z" fill="#3a87e4"/><rect x="0.2" y="2.3" width="9.6" height="6.4" fill="url(#fg)"/><rect x="0.2" y="8.4" width="9.6" height="0.7" fill="#589fe8"/></svg>
<div class="rt" style="left:219px;top:403.4px;color:#242424">Song Folders</div>
<svg class="ic" style="left:336.2px;top:407px" width="4" height="6" viewBox="0 0 4 6"><path d="M0.9 0.9 L2.9 3 L0.9 5.1" stroke="#979797" stroke-width="0.95" fill="none"/></svg>
<svg class="ic" style="left:204.5px;top:420.7px" width="10" height="10" viewBox="0 0 10 10"><path d="M0.2 0.9 Q0.2 0 1 0 L3.2 0 Q3.7 0 4 0.4 L4.4 1.1 L9.8 1.1 L9.8 2.4 L0.2 2.4 Z" fill="#3a87e4"/><rect x="0.2" y="2.3" width="9.6" height="6.4" fill="url(#fg)"/><rect x="0.2" y="8.4" width="9.6" height="0.7" fill="#589fe8"/></svg>
<div class="rt" style="left:219px;top:418.4px;color:#242424">Voice</div>
<svg class="ic" style="left:336.2px;top:422px" width="4" height="6" viewBox="0 0 4 6"><path d="M0.9 0.9 L2.9 3 L0.9 5.1" stroke="#979797" stroke-width="0.95" fill="none"/></svg>
<svg class="ic" style="left:371.5px;top:45px" width="11" height="11" viewBox="0 0 11 11"><rect x="0.2" y="0.1" width="10.4" height="10.4" rx="0.6" fill="#d2d2d2"/><rect x="0.2" y="0.1" width="10.4" height="9.5" rx="0.6" fill="#e6e6e6"/><rect x="0.8" y="0.6" width="9.2" height="8.6" fill="#f3f3f3"/><path d="M4 7.4 L4 4 L7.3 3.5 L7.3 6.8" stroke="#b9b9b9" stroke-width="0.55" fill="none"/><circle cx="3.4" cy="7.5" r="0.65" fill="#bdbdbd"/><circle cx="6.7" cy="6.9" r="0.65" fill="#bdbdbd"/></svg>
<div class="rt" style="left:386.6px;top:43.4px;color:#242424">***TheWhoWeAm.wav</div>
<svg class="ic" style="left:372.1px;top:60.7px" width="10" height="10" viewBox="0 0 10 10"><path d="M0.2 0.9 Q0.2 0 1 0 L3.2 0 Q3.7 0 4 0.4 L4.4 1.1 L9.8 1.1 L9.8 2.4 L0.2 2.4 Z" fill="#3a87e4"/><rect x="0.2" y="2.3" width="9.6" height="6.4" fill="url(#fg)"/><rect x="0.2" y="8.4" width="9.6" height="0.7" fill="#589fe8"/></svg>
<div class="rt" style="left:386.6px;top:58.4px;color:#242424">*01Jan</div>
<svg class="ic" style="left:503.8px;top:62px" width="4" height="6" viewBox="0 0 4 6"><path d="M0.9 0.9 L2.9 3 L0.9 5.1" stroke="#979797" stroke-width="0.95" fill="none"/></svg>
<svg class="ic" style="left:372.1px;top:75.7px" width="10" height="10" viewBox="0 0 10 10"><path d="M0.2 0.9 Q0.2 0 1 0 L3.2 0 Q3.7 0 4 0.4 L4.4 1.1 L9.8 1.1 L9.8 2.4 L0.2 2.4 Z" fill="#3a87e4"/><rect x="0.2" y="2.3" width="9.6" height="6.4" fill="url(#fg)"/><rect x="0.2" y="8.4" width="9.6" height="0.7" fill="#589fe8"/></svg>
<div class="rt" style="left:386.6px;top:73.4px;color:#242424">*02Feb</div>
<svg class="ic" style="left:503.8px;top:77px" width="4" height="6" viewBox="0 0 4 6"><path d="M0.9 0.9 L2.9 3 L0.9 5.1" stroke="#979797" stroke-width="0.95" fill="none"/></svg>
<svg class="ic" style="left:372.1px;top:90.7px" width="10" height="10" viewBox="0 0 10 10"><path d="M0.2 0.9 Q0.2 0 1 0 L3.2 0 Q3.7 0 4 0.4 L4.4 1.1 L9.8 1.1 L9.8 2.4 L0.2 2.4 Z" fill="#3a87e4"/><rect x="0.2" y="2.3" width="9.6" height="6.4" fill="url(#fg)"/><rect x="0.2" y="8.4" width="9.6" height="0.7" fill="#589fe8"/></svg>
<div class="rt" style="left:386.6px;top:88.4px;color:#242424">*03March</div>
<svg class="ic" style="left:503.8px;top:92px" width="4" height="6" viewBox="0 0 4 6"><path d="M0.9 0.9 L2.9 3 L0.9 5.1" stroke="#979797" stroke-width="0.95" fill="none"/></svg>
<div class="hl" style="left:367.6px;top:103px;width:143.4px;background:#d6d6d6"></div>
<svg class="ic" style="left:372.1px;top:105.7px" width="10" height="10" viewBox="0 0 10 10"><path d="M0.2 0.9 Q0.2 0 1 0 L3.2 0 Q3.7 0 4 0.4 L4.4 1.1 L9.8 1.1 L9.8 2.4 L0.2 2.4 Z" fill="#3a87e4"/><rect x="0.2" y="2.3" width="9.6" height="6.4" fill="url(#fg)"/><rect x="0.2" y="8.4" width="9.6" height="0.7" fill="#589fe8"/></svg>
<div class="rt" style="left:386.6px;top:103.4px;color:#242424">*04April</div>
<svg class="ic" style="left:503.8px;top:107px" width="4" height="6" viewBox="0 0 4 6"><path d="M0.9 0.9 L2.9 3 L0.9 5.1" stroke="#979797" stroke-width="0.95" fill="none"/></svg>
<svg class="ic" style="left:372.1px;top:120.7px" width="10" height="10" viewBox="0 0 10 10"><path d="M0.2 0.9 Q0.2 0 1 0 L3.2 0 Q3.7 0 4 0.4 L4.4 1.1 L9.8 1.1 L9.8 2.4 L0.2 2.4 Z" fill="#3a87e4"/><rect x="0.2" y="2.3" width="9.6" height="6.4" fill="url(#fg)"/><rect x="0.2" y="8.4" width="9.6" height="0.7" fill="#589fe8"/></svg>
<div class="rt" style="left:386.6px;top:118.4px;color:#242424"><span style="letter-spacing:-0.4px">01. SONG FOLDERS</span></div>
<svg class="ic" style="left:503.8px;top:122px" width="4" height="6" viewBox="0 0 4 6"><path d="M0.9 0.9 L2.9 3 L0.9 5.1" stroke="#979797" stroke-width="0.95" fill="none"/></svg>
<svg class="ic" style="left:372.1px;top:135.7px" width="10" height="10" viewBox="0 0 10 10"><path d="M0.2 0.9 Q0.2 0 1 0 L3.2 0 Q3.7 0 4 0.4 L4.4 1.1 L9.8 1.1 L9.8 2.4 L0.2 2.4 Z" fill="#3a87e4"/><rect x="0.2" y="2.3" width="9.6" height="6.4" fill="url(#fg)"/><rect x="0.2" y="8.4" width="9.6" height="0.7" fill="#589fe8"/></svg>
<div class="rt" style="left:386.6px;top:133.4px;color:#242424">05May</div>
<svg class="ic" style="left:503.8px;top:137px" width="4" height="6" viewBox="0 0 4 6"><path d="M0.9 0.9 L2.9 3 L0.9 5.1" stroke="#979797" stroke-width="0.95" fill="none"/></svg>
<svg class="ic" style="left:372.1px;top:150.7px" width="10" height="10" viewBox="0 0 10 10"><path d="M0.2 0.9 Q0.2 0 1 0 L3.2 0 Q3.7 0 4 0.4 L4.4 1.1 L9.8 1.1 L9.8 2.4 L0.2 2.4 Z" fill="#3a87e4"/><rect x="0.2" y="2.3" width="9.6" height="6.4" fill="url(#fg)"/><rect x="0.2" y="8.4" width="9.6" height="0.7" fill="#589fe8"/></svg>
<div class="rt" style="left:386.6px;top:148.4px;color:#242424">06June</div>
<svg class="ic" style="left:503.8px;top:152px" width="4" height="6" viewBox="0 0 4 6"><path d="M0.9 0.9 L2.9 3 L0.9 5.1" stroke="#979797" stroke-width="0.95" fill="none"/></svg>
<svg class="ic" style="left:372.1px;top:165.7px" width="10" height="10" viewBox="0 0 10 10"><path d="M0.2 0.9 Q0.2 0 1 0 L3.2 0 Q3.7 0 4 0.4 L4.4 1.1 L9.8 1.1 L9.8 2.4 L0.2 2.4 Z" fill="#3a87e4"/><rect x="0.2" y="2.3" width="9.6" height="6.4" fill="url(#fg)"/><rect x="0.2" y="8.4" width="9.6" height="0.7" fill="#589fe8"/></svg>
<div class="rt" style="left:386.6px;top:163.4px;color:#242424">07July</div>
<svg class="ic" style="left:503.8px;top:167px" width="4" height="6" viewBox="0 0 4 6"><path d="M0.9 0.9 L2.9 3 L0.9 5.1" stroke="#979797" stroke-width="0.95" fill="none"/></svg>
<svg class="ic" style="left:372.1px;top:180.7px" width="10" height="10" viewBox="0 0 10 10"><path d="M0.2 0.9 Q0.2 0 1 0 L3.2 0 Q3.7 0 4 0.4 L4.4 1.1 L9.8 1.1 L9.8 2.4 L0.2 2.4 Z" fill="#3a87e4"/><rect x="0.2" y="2.3" width="9.6" height="6.4" fill="url(#fg)"/><rect x="0.2" y="8.4" width="9.6" height="0.7" fill="#589fe8"/></svg>
<div class="rt" style="left:386.6px;top:178.4px;color:#242424">08August</div>
<svg class="ic" style="left:503.8px;top:182px" width="4" height="6" viewBox="0 0 4 6"><path d="M0.9 0.9 L2.9 3 L0.9 5.1" stroke="#979797" stroke-width="0.95" fill="none"/></svg>
<svg class="ic" style="left:372.1px;top:195.7px" width="10" height="10" viewBox="0 0 10 10"><path d="M0.2 0.9 Q0.2 0 1 0 L3.2 0 Q3.7 0 4 0.4 L4.4 1.1 L9.8 1.1 L9.8 2.4 L0.2 2.4 Z" fill="#3a87e4"/><rect x="0.2" y="2.3" width="9.6" height="6.4" fill="url(#fg)"/><rect x="0.2" y="8.4" width="9.6" height="0.7" fill="#589fe8"/></svg>
<div class="rt" style="left:386.6px;top:193.4px;color:#242424">09Sept</div>
<svg class="ic" style="left:503.8px;top:197px" width="4" height="6" viewBox="0 0 4 6"><path d="M0.9 0.9 L2.9 3 L0.9 5.1" stroke="#979797" stroke-width="0.95" fill="none"/></svg>
<svg class="ic" style="left:372.1px;top:210.7px" width="10" height="10" viewBox="0 0 10 10"><path d="M0.2 0.9 Q0.2 0 1 0 L3.2 0 Q3.7 0 4 0.4 L4.4 1.1 L9.8 1.1 L9.8 2.4 L0.2 2.4 Z" fill="#3a87e4"/><rect x="0.2" y="2.3" width="9.6" height="6.4" fill="url(#fg)"/><rect x="0.2" y="8.4" width="9.6" height="0.7" fill="#589fe8"/></svg>
<div class="rt" style="left:386.6px;top:208.4px;color:#242424">10Oct</div>
<svg class="ic" style="left:503.8px;top:212px" width="4" height="6" viewBox="0 0 4 6"><path d="M0.9 0.9 L2.9 3 L0.9 5.1" stroke="#979797" stroke-width="0.95" fill="none"/></svg>
<svg class="ic" style="left:372.1px;top:225.7px" width="10" height="10" viewBox="0 0 10 10"><path d="M0.2 0.9 Q0.2 0 1 0 L3.2 0 Q3.7 0 4 0.4 L4.4 1.1 L9.8 1.1 L9.8 2.4 L0.2 2.4 Z" fill="#3a87e4"/><rect x="0.2" y="2.3" width="9.6" height="6.4" fill="url(#fg)"/><rect x="0.2" y="8.4" width="9.6" height="0.7" fill="#589fe8"/></svg>
<div class="rt" style="left:386.6px;top:223.4px;color:#242424">11Nov</div>
<svg class="ic" style="left:503.8px;top:227px" width="4" height="6" viewBox="0 0 4 6"><path d="M0.9 0.9 L2.9 3 L0.9 5.1" stroke="#979797" stroke-width="0.95" fill="none"/></svg>
<svg class="ic" style="left:372.1px;top:240.7px" width="10" height="10" viewBox="0 0 10 10"><path d="M0.2 0.9 Q0.2 0 1 0 L3.2 0 Q3.7 0 4 0.4 L4.4 1.1 L9.8 1.1 L9.8 2.4 L0.2 2.4 Z" fill="#3a87e4"/><rect x="0.2" y="2.3" width="9.6" height="6.4" fill="url(#fg)"/><rect x="0.2" y="8.4" width="9.6" height="0.7" fill="#589fe8"/></svg>
<div class="rt" style="left:386.6px;top:238.4px;color:#242424">12Dec</div>
<svg class="ic" style="left:503.8px;top:242px" width="4" height="6" viewBox="0 0 4 6"><path d="M0.9 0.9 L2.9 3 L0.9 5.1" stroke="#979797" stroke-width="0.95" fill="none"/></svg>
<svg class="ic" style="left:371.5px;top:255px" width="11" height="11" viewBox="0 0 11 11"><rect x="0.2" y="0.1" width="10.4" height="10.4" rx="0.6" fill="#d2d2d2"/><rect x="0.2" y="0.1" width="10.4" height="9.5" rx="0.6" fill="#e6e6e6"/><rect x="0.8" y="0.6" width="9.2" height="8.6" fill="#f3f3f3"/><path d="M4 7.4 L4 4 L7.3 3.5 L7.3 6.8" stroke="#b9b9b9" stroke-width="0.55" fill="none"/><circle cx="3.4" cy="7.5" r="0.65" fill="#bdbdbd"/><circle cx="6.7" cy="6.9" r="0.65" fill="#bdbdbd"/></svg>
<div class="rt" style="left:386.6px;top:253.4px;color:#242424">AMD.0127.wav</div>
<svg class="ic" style="left:372.1px;top:270.7px" width="10" height="10" viewBox="0 0 10 10"><path d="M0.2 0.9 Q0.2 0 1 0 L3.2 0 Q3.7 0 4 0.4 L4.4 1.1 L9.8 1.1 L9.8 2.4 L0.2 2.4 Z" fill="#3a87e4"/><rect x="0.2" y="2.3" width="9.6" height="6.4" fill="url(#fg)"/><rect x="0.2" y="8.4" width="9.6" height="0.7" fill="#589fe8"/></svg>
<div class="rt" style="left:386.6px;top:268.4px;color:#242424">April 2 2015</div>
<svg class="ic" style="left:503.8px;top:272px" width="4" height="6" viewBox="0 0 4 6"><path d="M0.9 0.9 L2.9 3 L0.9 5.1" stroke="#979797" stroke-width="0.95" fill="none"/></svg>
<svg class="ic" style="left:372.1px;top:285.7px" width="10" height="10" viewBox="0 0 10 10"><path d="M0.2 0.9 Q0.2 0 1 0 L3.2 0 Q3.7 0 4 0.4 L4.4 1.1 L9.8 1.1 L9.8 2.4 L0.2 2.4 Z" fill="#3a87e4"/><rect x="0.2" y="2.3" width="9.6" height="6.4" fill="url(#fg)"/><rect x="0.2" y="8.4" width="9.6" height="0.7" fill="#589fe8"/></svg>
<div class="rt" style="left:386.6px;top:283.4px;color:#242424">April 1953</div>
<svg class="ic" style="left:503.8px;top:287px" width="4" height="6" viewBox="0 0 4 6"><path d="M0.9 0.9 L2.9 3 L0.9 5.1" stroke="#979797" stroke-width="0.95" fill="none"/></svg>
<svg class="ic" style="left:372.1px;top:300px" width="10" height="11" viewBox="0 0 10 11"><path d="M0.2 0.3 L6.6 0.3 L9.4 3.1 L9.4 10.4 L0.2 10.4 Z" fill="#d4d4d4"/><path d="M0.7 0.8 L6.4 0.8 L8.9 3.3 L8.9 9.5 L0.7 9.5 Z" fill="#f4f4f4"/><rect x="1.6" y="1.6" width="3.2" height="0.6" fill="#c4c4c4"/><rect x="2.4" y="7.1" width="4.6" height="1.3" fill="#8f8f8f"/></svg>
<div class="rt" style="left:386.6px;top:298.4px;color:#242424">Jan.14.2023 notes.rtf</div>
<svg class="ic" style="left:372.1px;top:315.7px" width="10" height="10" viewBox="0 0 10 10"><path d="M0.2 0.9 Q0.2 0 1 0 L3.2 0 Q3.7 0 4 0.4 L4.4 1.1 L9.8 1.1 L9.8 2.4 L0.2 2.4 Z" fill="#3a87e4"/><rect x="0.2" y="2.3" width="9.6" height="6.4" fill="url(#fg)"/><rect x="0.2" y="8.4" width="9.6" height="0.7" fill="#589fe8"/></svg>
<div class="rt" style="left:386.6px;top:313.4px;color:#242424">Melody&amp;Voice Diary</div>
<svg class="ic" style="left:503.8px;top:317px" width="4" height="6" viewBox="0 0 4 6"><path d="M0.9 0.9 L2.9 3 L0.9 5.1" stroke="#979797" stroke-width="0.95" fill="none"/></svg>
<svg class="ic" style="left:539.5px;top:45.7px" width="10" height="10" viewBox="0 0 10 10"><path d="M0.2 0.9 Q0.2 0 1 0 L3.2 0 Q3.7 0 4 0.4 L4.4 1.1 L9.8 1.1 L9.8 2.4 L0.2 2.4 Z" fill="#3a87e4"/><rect x="0.2" y="2.3" width="9.6" height="6.4" fill="url(#fg)"/><rect x="0.2" y="8.4" width="9.6" height="0.7" fill="#589fe8"/></svg>
<div class="rt" style="left:554px;top:43.4px;color:#242424">0510</div>
<svg class="ic" style="left:671.2px;top:47px" width="4" height="6" viewBox="0 0 4 6"><path d="M0.9 0.9 L2.9 3 L0.9 5.1" stroke="#979797" stroke-width="0.95" fill="none"/></svg>
<svg class="ic" style="left:539.5px;top:60.7px" width="10" height="10" viewBox="0 0 10 10"><path d="M0.2 0.9 Q0.2 0 1 0 L3.2 0 Q3.7 0 4 0.4 L4.4 1.1 L9.8 1.1 L9.8 2.4 L0.2 2.4 Z" fill="#3a87e4"/><rect x="0.2" y="2.3" width="9.6" height="6.4" fill="url(#fg)"/><rect x="0.2" y="8.4" width="9.6" height="0.7" fill="#589fe8"/></svg>
<div class="rt" style="left:554px;top:58.4px;color:#242424">0648</div>
<svg class="ic" style="left:671.2px;top:62px" width="4" height="6" viewBox="0 0 4 6"><path d="M0.9 0.9 L2.9 3 L0.9 5.1" stroke="#979797" stroke-width="0.95" fill="none"/></svg>
<svg class="ic" style="left:539.5px;top:75.7px" width="10" height="10" viewBox="0 0 10 10"><path d="M0.2 0.9 Q0.2 0 1 0 L3.2 0 Q3.7 0 4 0.4 L4.4 1.1 L9.8 1.1 L9.8 2.4 L0.2 2.4 Z" fill="#3a87e4"/><rect x="0.2" y="2.3" width="9.6" height="6.4" fill="url(#fg)"/><rect x="0.2" y="8.4" width="9.6" height="0.7" fill="#589fe8"/></svg>
<div class="rt" style="left:554px;top:73.4px;color:#242424">1703</div>
<svg class="ic" style="left:671.2px;top:77px" width="4" height="6" viewBox="0 0 4 6"><path d="M0.9 0.9 L2.9 3 L0.9 5.1" stroke="#979797" stroke-width="0.95" fill="none"/></svg>
<svg class="ic" style="left:539.5px;top:90.7px" width="10" height="10" viewBox="0 0 10 10"><path d="M0.2 0.9 Q0.2 0 1 0 L3.2 0 Q3.7 0 4 0.4 L4.4 1.1 L9.8 1.1 L9.8 2.4 L0.2 2.4 Z" fill="#3a87e4"/><rect x="0.2" y="2.3" width="9.6" height="6.4" fill="url(#fg)"/><rect x="0.2" y="8.4" width="9.6" height="0.7" fill="#589fe8"/></svg>
<div class="rt" style="left:554px;top:88.4px;color:#242424">1930</div>
<svg class="ic" style="left:671.2px;top:92px" width="4" height="6" viewBox="0 0 4 6"><path d="M0.9 0.9 L2.9 3 L0.9 5.1" stroke="#979797" stroke-width="0.95" fill="none"/></svg>
<svg class="ic" style="left:539.5px;top:105.7px" width="10" height="10" viewBox="0 0 10 10"><path d="M0.2 0.9 Q0.2 0 1 0 L3.2 0 Q3.7 0 4 0.4 L4.4 1.1 L9.8 1.1 L9.8 2.4 L0.2 2.4 Z" fill="#3a87e4"/><rect x="0.2" y="2.3" width="9.6" height="6.4" fill="url(#fg)"/><rect x="0.2" y="8.4" width="9.6" height="0.7" fill="#589fe8"/></svg>
<div class="rt" style="left:554px;top:103.4px;color:#242424">1953</div>
<svg class="ic" style="left:671.2px;top:107px" width="4" height="6" viewBox="0 0 4 6"><path d="M0.9 0.9 L2.9 3 L0.9 5.1" stroke="#979797" stroke-width="0.95" fill="none"/></svg>
<svg class="ic" style="left:539.5px;top:120.7px" width="10" height="10" viewBox="0 0 10 10"><path d="M0.2 0.9 Q0.2 0 1 0 L3.2 0 Q3.7 0 4 0.4 L4.4 1.1 L9.8 1.1 L9.8 2.4 L0.2 2.4 Z" fill="#3a87e4"/><rect x="0.2" y="2.3" width="9.6" height="6.4" fill="url(#fg)"/><rect x="0.2" y="8.4" width="9.6" height="0.7" fill="#589fe8"/></svg>
<div class="rt" style="left:554px;top:118.4px;color:#242424">1957</div>
<svg class="ic" style="left:671.2px;top:122px" width="4" height="6" viewBox="0 0 4 6"><path d="M0.9 0.9 L2.9 3 L0.9 5.1" stroke="#979797" stroke-width="0.95" fill="none"/></svg>
<svg class="ic" style="left:539.5px;top:135.7px" width="10" height="10" viewBox="0 0 10 10"><path d="M0.2 0.9 Q0.2 0 1 0 L3.2 0 Q3.7 0 4 0.4 L4.4 1.1 L9.8 1.1 L9.8 2.4 L0.2 2.4 Z" fill="#3a87e4"/><rect x="0.2" y="2.3" width="9.6" height="6.4" fill="url(#fg)"/><rect x="0.2" y="8.4" width="9.6" height="0.7" fill="#589fe8"/></svg>
<div class="rt" style="left:554px;top:133.4px;color:#242424">2005</div>
<svg class="ic" style="left:671.2px;top:137px" width="4" height="6" viewBox="0 0 4 6"><path d="M0.9 0.9 L2.9 3 L0.9 5.1" stroke="#979797" stroke-width="0.95" fill="none"/></svg>
<svg class="ic" style="left:539.5px;top:150.7px" width="10" height="10" viewBox="0 0 10 10"><path d="M0.2 0.9 Q0.2 0 1 0 L3.2 0 Q3.7 0 4 0.4 L4.4 1.1 L9.8 1.1 L9.8 2.4 L0.2 2.4 Z" fill="#3a87e4"/><rect x="0.2" y="2.3" width="9.6" height="6.4" fill="url(#fg)"/><rect x="0.2" y="8.4" width="9.6" height="0.7" fill="#589fe8"/></svg>
<div class="rt" style="left:554px;top:148.4px;color:#242424">2014</div>
<svg class="ic" style="left:671.2px;top:152px" width="4" height="6" viewBox="0 0 4 6"><path d="M0.9 0.9 L2.9 3 L0.9 5.1" stroke="#979797" stroke-width="0.95" fill="none"/></svg>
<svg class="ic" style="left:539.5px;top:165.7px" width="10" height="10" viewBox="0 0 10 10"><path d="M0.2 0.9 Q0.2 0 1 0 L3.2 0 Q3.7 0 4 0.4 L4.4 1.1 L9.8 1.1 L9.8 2.4 L0.2 2.4 Z" fill="#3a87e4"/><rect x="0.2" y="2.3" width="9.6" height="6.4" fill="url(#fg)"/><rect x="0.2" y="8.4" width="9.6" height="0.7" fill="#589fe8"/></svg>
<div class="rt" style="left:554px;top:163.4px;color:#242424">2016</div>
<svg class="ic" style="left:671.2px;top:167px" width="4" height="6" viewBox="0 0 4 6"><path d="M0.9 0.9 L2.9 3 L0.9 5.1" stroke="#979797" stroke-width="0.95" fill="none"/></svg>
<svg class="ic" style="left:539.5px;top:180.7px" width="10" height="10" viewBox="0 0 10 10"><path d="M0.2 0.9 Q0.2 0 1 0 L3.2 0 Q3.7 0 4 0.4 L4.4 1.1 L9.8 1.1 L9.8 2.4 L0.2 2.4 Z" fill="#3a87e4"/><rect x="0.2" y="2.3" width="9.6" height="6.4" fill="url(#fg)"/><rect x="0.2" y="8.4" width="9.6" height="0.7" fill="#589fe8"/></svg>
<div class="rt" style="left:554px;top:178.4px;color:#242424">2022</div>
<svg class="ic" style="left:671.2px;top:182px" width="4" height="6" viewBox="0 0 4 6"><path d="M0.9 0.9 L2.9 3 L0.9 5.1" stroke="#979797" stroke-width="0.95" fill="none"/></svg>
<svg class="ic" style="left:539.5px;top:195.7px" width="10" height="10" viewBox="0 0 10 10"><path d="M0.2 0.9 Q0.2 0 1 0 L3.2 0 Q3.7 0 4 0.4 L4.4 1.1 L9.8 1.1 L9.8 2.4 L0.2 2.4 Z" fill="#3a87e4"/><rect x="0.2" y="2.3" width="9.6" height="6.4" fill="url(#fg)"/><rect x="0.2" y="8.4" width="9.6" height="0.7" fill="#589fe8"/></svg>
<div class="rt" style="left:554px;top:193.4px;color:#242424">2023</div>
<svg class="ic" style="left:671.2px;top:197px" width="4" height="6" viewBox="0 0 4 6"><path d="M0.9 0.9 L2.9 3 L0.9 5.1" stroke="#979797" stroke-width="0.95" fill="none"/></svg>
<svg class="ic" style="left:539.5px;top:210.7px" width="10" height="10" viewBox="0 0 10 10"><path d="M0.2 0.9 Q0.2 0 1 0 L3.2 0 Q3.7 0 4 0.4 L4.4 1.1 L9.8 1.1 L9.8 2.4 L0.2 2.4 Z" fill="#3a87e4"/><rect x="0.2" y="2.3" width="9.6" height="6.4" fill="url(#fg)"/><rect x="0.2" y="8.4" width="9.6" height="0.7" fill="#589fe8"/></svg>
<div class="rt" style="left:554px;top:208.4px;color:#242424">2037</div>
<svg class="ic" style="left:671.2px;top:212px" width="4" height="6" viewBox="0 0 4 6"><path d="M0.9 0.9 L2.9 3 L0.9 5.1" stroke="#979797" stroke-width="0.95" fill="none"/></svg>
<div class="hl" style="left:535px;top:223px;width:143.4px;background:#d6d6d6"></div>
<svg class="ic" style="left:539.5px;top:225.7px" width="10" height="10" viewBox="0 0 10 10"><path d="M0.2 0.9 Q0.2 0 1 0 L3.2 0 Q3.7 0 4 0.4 L4.4 1.1 L9.8 1.1 L9.8 2.4 L0.2 2.4 Z" fill="#3a87e4"/><rect x="0.2" y="2.3" width="9.6" height="6.4" fill="url(#fg)"/><rect x="0.2" y="8.4" width="9.6" height="0.7" fill="#589fe8"/></svg>
<div class="rt" style="left:554px;top:223.4px;color:#242424">2039</div>
<svg class="ic" style="left:671.2px;top:227px" width="4" height="6" viewBox="0 0 4 6"><path d="M0.9 0.9 L2.9 3 L0.9 5.1" stroke="#979797" stroke-width="0.95" fill="none"/></svg>
<svg class="ic" style="left:539.5px;top:240.7px" width="10" height="10" viewBox="0 0 10 10"><path d="M0.2 0.9 Q0.2 0 1 0 L3.2 0 Q3.7 0 4 0.4 L4.4 1.1 L9.8 1.1 L9.8 2.4 L0.2 2.4 Z" fill="#3a87e4"/><rect x="0.2" y="2.3" width="9.6" height="6.4" fill="url(#fg)"/><rect x="0.2" y="8.4" width="9.6" height="0.7" fill="#589fe8"/></svg>
<div class="rt" style="left:554px;top:238.4px;color:#242424">2042</div>
<svg class="ic" style="left:671.2px;top:242px" width="4" height="6" viewBox="0 0 4 6"><path d="M0.9 0.9 L2.9 3 L0.9 5.1" stroke="#979797" stroke-width="0.95" fill="none"/></svg>
<svg class="ic" style="left:539.5px;top:255.7px" width="10" height="10" viewBox="0 0 10 10"><path d="M0.2 0.9 Q0.2 0 1 0 L3.2 0 Q3.7 0 4 0.4 L4.4 1.1 L9.8 1.1 L9.8 2.4 L0.2 2.4 Z" fill="#3a87e4"/><rect x="0.2" y="2.3" width="9.6" height="6.4" fill="url(#fg)"/><rect x="0.2" y="8.4" width="9.6" height="0.7" fill="#589fe8"/></svg>
<div class="rt" style="left:554px;top:253.4px;color:#242424">2047</div>
<svg class="ic" style="left:671.2px;top:257px" width="4" height="6" viewBox="0 0 4 6"><path d="M0.9 0.9 L2.9 3 L0.9 5.1" stroke="#979797" stroke-width="0.95" fill="none"/></svg>
<svg class="ic" style="left:539.5px;top:270.7px" width="10" height="10" viewBox="0 0 10 10"><path d="M0.2 0.9 Q0.2 0 1 0 L3.2 0 Q3.7 0 4 0.4 L4.4 1.1 L9.8 1.1 L9.8 2.4 L0.2 2.4 Z" fill="#3a87e4"/><rect x="0.2" y="2.3" width="9.6" height="6.4" fill="url(#fg)"/><rect x="0.2" y="8.4" width="9.6" height="0.7" fill="#589fe8"/></svg>
<div class="rt" style="left:554px;top:268.4px;color:#242424">2049</div>
<svg class="ic" style="left:671.2px;top:272px" width="4" height="6" viewBox="0 0 4 6"><path d="M0.9 0.9 L2.9 3 L0.9 5.1" stroke="#979797" stroke-width="0.95" fill="none"/></svg>
<svg class="ic" style="left:539.5px;top:285.7px" width="10" height="10" viewBox="0 0 10 10"><path d="M0.2 0.9 Q0.2 0 1 0 L3.2 0 Q3.7 0 4 0.4 L4.4 1.1 L9.8 1.1 L9.8 2.4 L0.2 2.4 Z" fill="#3a87e4"/><rect x="0.2" y="2.3" width="9.6" height="6.4" fill="url(#fg)"/><rect x="0.2" y="8.4" width="9.6" height="0.7" fill="#589fe8"/></svg>
<div class="rt" style="left:554px;top:283.4px;color:#242424">2108</div>
<svg class="ic" style="left:671.2px;top:287px" width="4" height="6" viewBox="0 0 4 6"><path d="M0.9 0.9 L2.9 3 L0.9 5.1" stroke="#979797" stroke-width="0.95" fill="none"/></svg>
<svg class="ic" style="left:538.9px;top:300px" width="11" height="11" viewBox="0 0 11 11"><rect x="0.2" y="0.1" width="10.4" height="10.4" rx="0.6" fill="#d2d2d2"/><rect x="0.2" y="0.1" width="10.4" height="9.5" rx="0.6" fill="#e6e6e6"/><rect x="0.8" y="0.6" width="9.2" height="8.6" fill="#f3f3f3"/><path d="M4 7.4 L4 4 L7.3 3.5 L7.3 6.8" stroke="#b9b9b9" stroke-width="0.55" fill="none"/><circle cx="3.4" cy="7.5" r="0.65" fill="#bdbdbd"/><circle cx="6.7" cy="6.9" r="0.65" fill="#bdbdbd"/></svg>
<div class="rt" style="left:554px;top:298.4px;color:#242424">In the Sweet…ime copy.wav</div>
<svg class="ic" style="left:538.9px;top:315px" width="11" height="11" viewBox="0 0 11 11"><rect x="0.2" y="0.1" width="10.4" height="10.4" rx="0.6" fill="#d2d2d2"/><rect x="0.2" y="0.1" width="10.4" height="9.5" rx="0.6" fill="#e6e6e6"/><rect x="0.8" y="0.6" width="9.2" height="8.6" fill="#f3f3f3"/><path d="M4 7.4 L4 4 L7.3 3.5 L7.3 6.8" stroke="#b9b9b9" stroke-width="0.55" fill="none"/><circle cx="3.4" cy="7.5" r="0.65" fill="#bdbdbd"/><circle cx="6.7" cy="6.9" r="0.65" fill="#bdbdbd"/></svg>
<div class="rt" style="left:554px;top:313.4px;color:#242424">In the Sweet…mertime.wav</div>
<svg class="ic" style="left:706.4px;top:45px" width="11" height="11" viewBox="0 0 11 11"><rect x="0.2" y="0.1" width="10.4" height="10.4" rx="0.6" fill="#d2d2d2"/><rect x="0.2" y="0.1" width="10.4" height="9.5" rx="0.6" fill="#e6e6e6"/><rect x="0.8" y="0.6" width="9.2" height="8.6" fill="#f3f3f3"/><path d="M4 7.4 L4 4 L7.3 3.5 L7.3 6.8" stroke="#b9b9b9" stroke-width="0.55" fill="none"/><circle cx="3.4" cy="7.5" r="0.65" fill="#bdbdbd"/><circle cx="6.7" cy="6.9" r="0.65" fill="#bdbdbd"/></svg>
<div class="rt" style="left:721.5px;top:43.4px;color:#242424">**PartOne.2039.wav</div>
<svg class="ic" style="left:706.4px;top:60px" width="11" height="11" viewBox="0 0 11 11"><rect x="0.2" y="0.1" width="10.4" height="10.4" rx="0.6" fill="#d2d2d2"/><rect x="0.2" y="0.1" width="10.4" height="9.5" rx="0.6" fill="#e6e6e6"/><rect x="0.8" y="0.6" width="9.2" height="8.6" fill="#f3f3f3"/><path d="M4 7.4 L4 4 L7.3 3.5 L7.3 6.8" stroke="#b9b9b9" stroke-width="0.55" fill="none"/><circle cx="3.4" cy="7.5" r="0.65" fill="#bdbdbd"/><circle cx="6.7" cy="6.9" r="0.65" fill="#bdbdbd"/></svg>
<div class="rt" style="left:721.5px;top:58.4px;color:#242424">*HowDidWe.2039.mp3</div>
<svg class="ic" style="left:706.4px;top:75px" width="11" height="11" viewBox="0 0 11 11"><rect x="0.2" y="0.1" width="10.4" height="10.4" rx="0.6" fill="#d2d2d2"/><rect x="0.2" y="0.1" width="10.4" height="9.5" rx="0.6" fill="#e6e6e6"/><rect x="0.8" y="0.6" width="9.2" height="8.6" fill="#f3f3f3"/><path d="M4 7.4 L4 4 L7.3 3.5 L7.3 6.8" stroke="#b9b9b9" stroke-width="0.55" fill="none"/><circle cx="3.4" cy="7.5" r="0.65" fill="#bdbdbd"/><circle cx="6.7" cy="6.9" r="0.65" fill="#bdbdbd"/></svg>
<div class="rt" style="left:721.5px;top:73.4px;color:#242424">*HowDidWe.2039.wav</div>
<svg class="ic" style="left:706.4px;top:90px" width="11" height="11" viewBox="0 0 11 11"><rect x="0.2" y="0.1" width="10.4" height="10.4" rx="0.6" fill="#d2d2d2"/><rect x="0.2" y="0.1" width="10.4" height="9.5" rx="0.6" fill="#e6e6e6"/><rect x="0.8" y="0.6" width="9.2" height="8.6" fill="#f3f3f3"/><path d="M4 7.4 L4 4 L7.3 3.5 L7.3 6.8" stroke="#b9b9b9" stroke-width="0.55" fill="none"/><circle cx="3.4" cy="7.5" r="0.65" fill="#bdbdbd"/><circle cx="6.7" cy="6.9" r="0.65" fill="#bdbdbd"/></svg>
<div class="rt" style="left:721.5px;top:88.4px;color:#242424">007L_150401_2039.WAV</div>
<div class="hl" style="left:702.5px;top:103px;width:143px;background:#2955dc"></div>
<svg class="ic" style="left:706.4px;top:105px" width="11" height="11" viewBox="0 0 11 11"><rect x="0.2" y="0.1" width="10.4" height="10.4" rx="0.6" fill="#d2d2d2"/><rect x="0.2" y="0.1" width="10.4" height="9.5" rx="0.6" fill="#e6e6e6"/><rect x="0.8" y="0.6" width="9.2" height="8.6" fill="#f7f7f7"/><path d="M4 7.4 L4 4 L7.3 3.5 L7.3 6.8" stroke="#b9b9b9" stroke-width="0.55" fill="none"/><circle cx="3.4" cy="7.5" r="0.65" fill="#bdbdbd"/><circle cx="6.7" cy="6.9" r="0.65" fill="#bdbdbd"/></svg>
<div class="rt" style="left:721.5px;top:103.4px;color:#fff">AMD.2039.wav</div>
<svg class="ic" style="left:707.0px;top:120px" width="10" height="11" viewBox="0 0 10 11"><path d="M0.6 0.5 L6.2 0.5 L8.6 2.9 L8.6 9.4 L0.6 9.4 Z" fill="#fff" stroke="#e8614f" stroke-width="0.8"/><path d="M4.6 2 L4.6 4.8 M2.4 6 L4.6 4.8 L6.8 6" stroke="#e0392a" stroke-width="1" fill="none"/><rect x="2.9" y="6.9" width="3.4" height="1.2" fill="#8b5a50"/></svg>
<div class="rt" style="left:721.5px;top:118.4px;color:#242424">HowDidWe.2039.pdf</div>
<!-- preview -->
<svg style="position:absolute;left:870px;top:68px" width="140" height="140" viewBox="0 0 140 140"><defs><linearGradient id="pg" x1="0" y1="0" x2="0" y2="1"><stop offset="0" stop-color="#f3f3f3"/><stop offset="1" stop-color="#ebebeb"/></linearGradient></defs><rect width="140" height="140" fill="url(#pg)"/><path d="M55 46 Q55 43.8 57.2 43.4 L90.5 37.2 Q93.7 36.7 93.7 39.6 L93.7 87 Q93.7 97 83 97 Q73 97 73 89 Q73 82 82 82 L89.2 82 L89.2 53.6 Q89.2 52.6 88.2 52.8 L60.2 58.2 Q59 58.4 59 59.6 L59 93 Q59 103.7 48.6 103.7 Q38 103.7 38 96 Q38 88.7 47 88.7 L55 88.7 Z" fill="#c6c6c6"/></svg>
<div style="position:absolute;left:870.4px;top:249px;height:16px;line-height:16px;font-size:10.4px;font-weight:bold;color:#2a2a2a;white-space:nowrap">AMD.2039.wav</div>
<div style="position:absolute;left:870.2px;top:264.6px;height:12px;line-height:12px;font-size:9.35px;color:#8c8c8c;white-space:nowrap">Waveform audio - 143 MB</div>
<div style="position:absolute;left:870.3px;top:280.6px;height:12px;line-height:12px;font-size:8.9px;font-weight:bold;color:#2a2a2a;white-space:nowrap">Information</div>
<div style="position:absolute;right:14.3px;top:280.9px;height:12px;line-height:12px;font-size:7.7px;color:#3b6fe0;white-space:nowrap">Show Less</div>
<div class="pk" style="top:297.5px">Created</div><div class="pv" style="top:297.5px">April 14, 2015 at 4:11 AM</div><div class="sep" style="top:308.8px"></div><div class="pk" style="top:313.25px">Modified</div><div class="pv" style="top:313.25px">April 14, 2015 at 4:11 AM</div><div class="sep" style="top:324.40000000000003px"></div><div class="pk" style="top:329.0px">Last opened</div><div class="pv" style="top:329.0px">3/30/23, 10:30 PM</div><div class="sep" style="top:340.0px"></div><div class="pk" style="top:344.75px">Duration</div><div class="pv" style="top:344.75px">09:00</div><div class="sep" style="top:355.6px"></div><div class="pk" style="top:360.5px">Audio channels</div><div class="pv" style="top:360.5px">Stereo</div><div class="sep" style="top:371.2px"></div><div class="pk" style="top:376.25px">Sample rate</div><div class="pv" style="top:376.25px">44.1 kHz</div><div class="sep" style="top:386.8px"></div><div class="pk" style="top:392.0px">Bits per sample</div><div class="pv" style="top:392.0px">24</div>
<div style="position:absolute;left:870.3px;top:411px;height:12px;line-height:12px;font-size:8.9px;font-weight:bold;color:#2a2a2a">Tags</div>
<div style="position:absolute;left:870.3px;top:426px;height:12px;line-height:12px;font-size:8.6px;color:#c3c3c3;white-space:nowrap">Add Tags…</div>
<svg class="ic" style="left:905px;top:469px" width="18" height="12" viewBox="0 0 18 12"><g fill="#707070"><path d="M0.4 4 L2.6 5.8 L0.4 7.6 Z"/><path d="M17.6 4 L15.4 5.8 L17.6 7.6 Z"/></g><rect x="4.4" y="1.2" width="9.2" height="9.2" rx="1" fill="none" stroke="#6a6a6a" stroke-width="0.9"/><path d="M5.6 1.4 L5.6 10.2 M12.4 1.4 L12.4 10.2" stroke="#8a8a8a" stroke-width="1.2"/></svg>
<div style="position:absolute;left:906px;top:486.5px;height:10px;line-height:10px;font-size:8.2px;color:#6c6c6c">Trim</div>
<svg class="ic" style="left:960px;top:469px" width="12" height="12" viewBox="0 0 12 12"><circle cx="6" cy="6" r="5" fill="none" stroke="#777" stroke-width="0.9"/><g fill="#888"><rect x="3.4" y="5.6" width="1" height="0.8"/><rect x="5.5" y="5.6" width="1" height="0.8"/><rect x="7.6" y="5.6" width="1" height="0.8"/></g></svg>
<div style="position:absolute;left:954px;top:486.5px;height:10px;line-height:10px;font-size:8.2px;color:#6c6c6c;white-space:nowrap;letter-spacing:-0.2px">More…</div>
<!-- bottom scrollbar -->
<div style="position:absolute;left:161px;top:506px;width:863px;height:4px;background:#f8f8f8;border-top:1px solid #e6e6e6"></div>
<div style="position:absolute;left:281px;top:508.6px;width:741px;height:2px;background:#a8a8a8;border-radius:1px"></div>
</div></body></html>
